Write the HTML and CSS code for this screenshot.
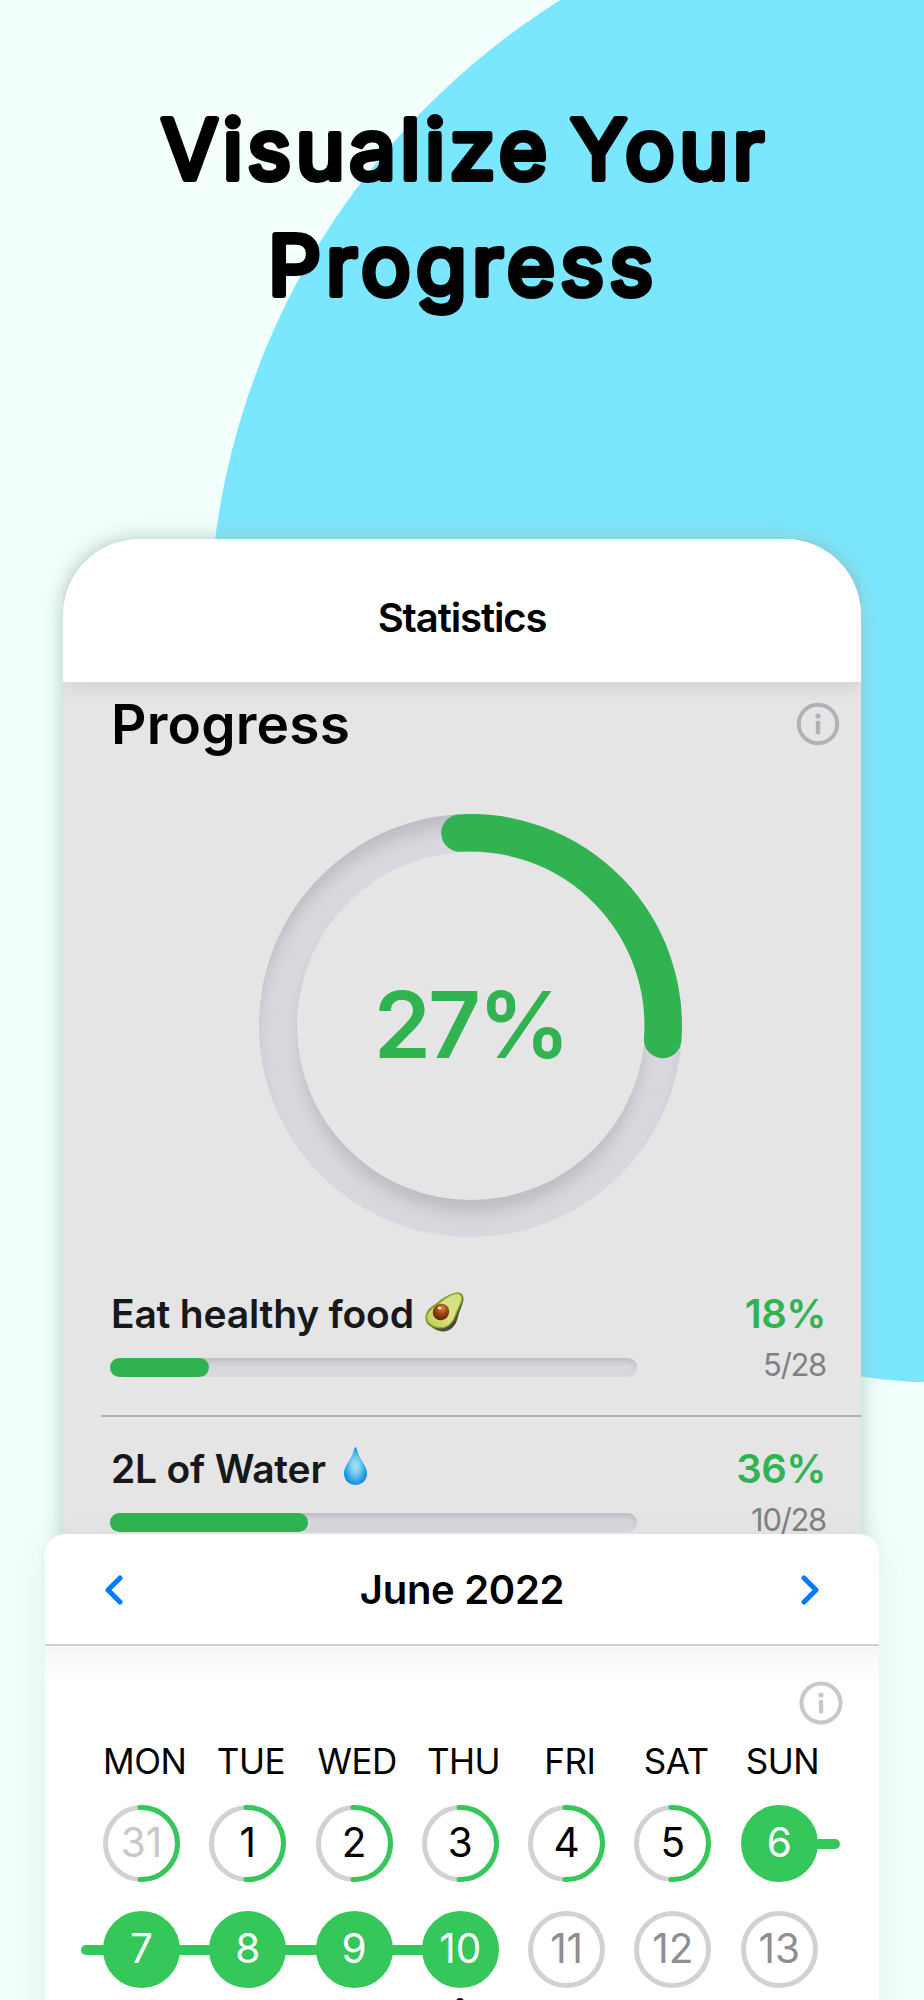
FILE: index.html
```html
<!DOCTYPE html>
<html lang="en">
<head>
    <meta charset="UTF-8">
    <meta name="viewport" content="width=device-width, initial-scale=1.0">
    <title>Visualize Your Progress</title>
    <link rel="stylesheet" href="styles.css">
</head>
<body>
    <div class="screen">
        <div class="blob"></div>

        <svg class="hero" viewBox="0 0 924 539" width="924" height="539">
            <text x="161" y="179" textLength="603">Visualize Your</text>
            <text x="268" y="295" textLength="385">Progress</text>
        </svg>

        <section class="stats">
            <header class="stats-header">Statistics</header>
            <div class="stats-body">
                <div class="title-row">
                    <h2>Progress</h2>
                    <svg class="info" viewBox="0 0 44 44">
                        <circle class="info-ring" cx="22" cy="22" r="19.2"/>
                        <circle cx="22" cy="14" r="2.6"/>
                        <rect x="19.8" y="18.6" width="4.4" height="14" rx="2"/>
                    </svg>
                </div>

                <div class="ring">
                    <div class="ring-hole">27%</div>
                    <svg class="ring-arc" viewBox="0 0 423 423">
                        <path d="M201 19.1 A192.75 192.75 0 0 1 403.7 225.5"/>
                    </svg>
                </div>

                <div class="habit">
                    <div class="habit-left">
                        <div class="habit-name"><span>Eat healthy food</span>
                            <svg class="avocado" viewBox="0 0 39 40">
                                <defs>
                                    <linearGradient id="skin" x1="0" y1="0" x2="1" y2="1">
                                        <stop offset="0" stop-color="#8faa2c"/>
                                        <stop offset="0.5" stop-color="#5c7a22"/>
                                        <stop offset="0.8" stop-color="#45433a"/>
                                        <stop offset="1" stop-color="#6b6862"/>
                                    </linearGradient>
                                    <linearGradient id="flesh" x1="1" y1="0" x2="0" y2="1">
                                        <stop offset="0" stop-color="#cfdf7a"/>
                                        <stop offset="0.5" stop-color="#dbe48c"/>
                                        <stop offset="1" stop-color="#b8cc45"/>
                                    </linearGradient>
                                    <radialGradient id="pit" cx="0.4" cy="0.3" r="0.7">
                                        <stop offset="0" stop-color="#d98a4e"/>
                                        <stop offset="0.45" stop-color="#a34a14"/>
                                        <stop offset="1" stop-color="#5e2206"/>
                                    </radialGradient>
                                </defs>
                                <path fill="url(#skin)" d="M30 1 C36 -1 40 4 38 10 C36 17 34 20 33 25 C31 34 25 40 17 39.500 C12 39 9 37 6 34.500 C1 32 -0.500 27 1 22 C3 16 8 14 13 10 C18 6 24 2 30 1 Z"/>
                                <path fill="url(#flesh)" stroke="#8cae25" stroke-width="1.200" d="M30 1.700 C35 0.500 38 4 36.500 9 C35 14 32 18 30.500 23 C28.500 30 23 36 15.500 35.700 C7 35.500 0 30 2 23 C4 17 9 15 14 11 C19 7 24 2.800 30 1.700 Z"/>
                                <ellipse cx="16" cy="20" rx="8" ry="8.500" fill="url(#pit)" transform="rotate(40 16 20)"/>
                                <ellipse cx="14.500" cy="16" rx="1.800" ry="1.200" fill="#fbe3cc"/>
                            </svg>
                        </div>
                        <div class="bar"><div class="bar-fill" style="width: 18.8%"></div></div>
                    </div>
                    <div class="habit-right">
                        <div class="percent">18%</div>
                        <div class="count">5/28</div>
                    </div>
                </div>

                <div class="habit">
                    <div class="habit-left">
                        <div class="habit-name"><span>2L of Water</span>
                            <svg class="drop" viewBox="0 0 23 38">
                                <defs>
                                    <radialGradient id="water" cx="0.5" cy="0.5" r="0.55">
                                        <stop offset="0" stop-color="#a9e2ee"/>
                                        <stop offset="0.35" stop-color="#7fd0ee"/>
                                        <stop offset="0.75" stop-color="#2ba3e4"/>
                                        <stop offset="1" stop-color="#1586d0"/>
                                    </radialGradient>
                                </defs>
                                <path fill="url(#water)" d="M11.500 0 C12.500 0 13 2 14 6 C16 13 23 19 23 26.500 C23 33 18 38 11.500 38 C5 38 0 33 0 26.500 C0 19 7 13 9 6 C10 2 10.500 0 11.500 0 Z"/>
                            </svg>
                        </div>
                        <div class="bar"><div class="bar-fill" style="width: 37.6%"></div></div>
                    </div>
                    <div class="habit-right">
                        <div class="percent">36%</div>
                        <div class="count">10/28</div>
                    </div>
                </div>
            </div>
        </section>

        <section class="calendar">
            <header class="calendar-header">
                <svg class="chevron" viewBox="0 0 18 30"><path d="M15 3 L3 15 L15 27"/></svg>
                <span>June 2022</span>
                <svg class="chevron" viewBox="0 0 18 30"><path d="M3 3 L15 15 L3 27"/></svg>
            </header>
            <div class="calendar-body">
                <svg class="info" viewBox="0 0 44 44">
                    <circle class="info-ring" cx="22" cy="22" r="19.5"/>
                    <circle cx="22" cy="14" r="2.6"/>
                    <rect x="19.8" y="18.6" width="4.4" height="14" rx="2"/>
                </svg>
                <div class="weekdays">
                    <span>MON</span><span>TUE</span><span>WED</span><span>THU</span><span>FRI</span><span>SAT</span><span>SUN</span>
                </div>
                <div class="days">
                    <div class="day half other"><svg viewBox="0 0 77 77"><path d="M37 2.500 H38.500 A36 36 0 0 1 38.500 74.500 H37"/></svg><b>31</b></div>
                    <div class="day half"><svg viewBox="0 0 77 77"><path d="M37 2.500 H38.500 A36 36 0 0 1 38.500 74.500 H37"/></svg><b>1</b></div>
                    <div class="day half"><svg viewBox="0 0 77 77"><path d="M37 2.500 H38.500 A36 36 0 0 1 38.500 74.500 H37"/></svg><b>2</b></div>
                    <div class="day half"><svg viewBox="0 0 77 77"><path d="M37 2.500 H38.500 A36 36 0 0 1 38.500 74.500 H37"/></svg><b>3</b></div>
                    <div class="day half"><svg viewBox="0 0 77 77"><path d="M37 2.500 H38.500 A36 36 0 0 1 38.500 74.500 H37"/></svg><b>4</b></div>
                    <div class="day half"><svg viewBox="0 0 77 77"><path d="M37 2.500 H38.500 A36 36 0 0 1 38.500 74.500 H37"/></svg><b>5</b></div>
                    <div class="day done row-end"><b>6</b></div>
                    <div class="day done row-start"><b>7</b></div>
                    <div class="day done"><b>8</b></div>
                    <div class="day done"><b>9</b></div>
                    <div class="day done last today"><b>10</b></div>
                    <div class="day future"><b>11</b></div>
                    <div class="day future"><b>12</b></div>
                    <div class="day future"><b>13</b></div>
                </div>
            </div>
        </section>
    </div>
</body>
</html>
```
FILE: styles.css
```css
* {
    box-sizing: border-box;
}

body {
    margin: 0;
    font-family: 'Inter', 'Liberation Sans', sans-serif;
    color: #000;
}

svg {
    display: block;
    flex-shrink: 0;
}

.screen {
    position: relative;
    width: 924px;
    height: 2000px;
    overflow: hidden;
    background: #f2fffd;
}

/* big circle behind everything */
.blob {
    position: absolute;
    left: 208.5px;
    top: -114.5px;
    width: 1497px;
    height: 1497px;
    border-radius: 50%;
    background: #7ae7ff;
}

.hero {
    position: relative;
}

.hero text {
    font-size: 83px;
    font-weight: 400;
    stroke: #000;
    stroke-width: 6px;
    stroke-linejoin: round;
    word-spacing: -9px;
}

.stats {
    position: relative;
    height: 1030px;
    margin: 0 63px;
    border-radius: 76px 76px 0 0;
    background: #e5e5e5;
    box-shadow: 0 0 22px rgba(160, 192, 180, 0.8);
}

.stats-header {
    position: relative;
    height: 142.5px;
    padding-top: 55px;
    border-radius: 76px 76px 0 0;
    background: #fff;
    box-shadow: 0 6px 22px -2px rgba(0, 0, 0, 0.1);
    clip-path: inset(0 0 -30px 0);
    font-size: 40px;
    font-weight: 600;
    line-height: 48px;
    letter-spacing: -1.1px;
    text-align: center;
}

.title-row {
    display: flex;
    align-items: center;
    justify-content: space-between;
    height: 85.5px;
    padding: 0 21px 0 48px;
}

h2 {
    margin: 0;
    font-size: 55px;
    font-weight: 600;
    letter-spacing: 0.2px;
}

.info {
    width: 44px;
    height: 44px;
    fill: #b2b1b8;
}

.info-ring {
    fill: none;
    stroke: #b2b1b8;
    stroke-width: 4px;
}

.ring {
    position: relative;
    width: 423px;
    height: 423px;
    margin: 47px 0 0 196px;
    padding: 37.5px;
    border-radius: 50%;
    background: #d9d8df;
    box-shadow: inset 0 14px 16px -2px rgba(0, 0, 0, 0.13);
}

.ring-hole {
    height: 348px;
    border-radius: 50%;
    background: #e5e5e5;
    box-shadow: 0 14px 16px -2px rgba(0, 0, 0, 0.13);
    color: #30b350;
    font-size: 92px;
    font-weight: 600;
    line-height: 346px;
    letter-spacing: -3px;
    text-align: center;
}

.ring-arc {
    position: absolute;
    left: 0;
    top: 0;
    width: 423px;
    height: 423px;
    fill: none;
    stroke: #30b350;
    stroke-width: 37.5px;
    stroke-linecap: round;
}

.habit {
    display: flex;
    justify-content: space-between;
    height: 155px;
    margin-left: 38px;
    padding: 28.5px 35px 0 9px;
    border-bottom: 2px solid #b0b0b0;
}

.ring + .habit {
    height: 180px;
    padding-top: 53.5px;
}

.habit-left {
    width: 527px;
}

.habit-name {
    display: flex;
    align-items: center;
    height: 46px;
    margin-bottom: 21px;
    padding-left: 1px;
    color: #18181a;
    font-size: 39px;
    font-weight: 600;
    letter-spacing: -0.2px;
}

.avocado {
    width: 39px;
    height: 40px;
    margin: -3px 0 0 11px;
}

.drop {
    width: 23px;
    height: 38px;
    margin: -5px 0 0 18px;
}

.bar {
    height: 19px;
    border-radius: 10px;
    background: #d9d8df;
    box-shadow: inset 0 5px 7px -2px rgba(0, 0, 0, 0.15);
}

.bar-fill {
    height: 19px;
    border-radius: 10px;
    background: #30b350;
}

.habit-right {
    text-align: right;
}

.percent {
    height: 46px;
    color: #30b350;
    font-size: 40px;
    font-weight: 600;
    line-height: 46px;
    letter-spacing: -0.5px;
}

.count {
    margin-top: 9px;
    color: #808084;
    font-size: 31px;
    line-height: 38px;
    letter-spacing: -1.3px;
}

.calendar {
    position: relative;
    height: 500px;
    margin: -35px 45px 0;
    border-radius: 20px 20px 0 0;
    background: #fff;
    box-shadow: 0 10px 36px rgba(60, 120, 100, 0.11);
}

.calendar-header {
    display: flex;
    align-items: center;
    justify-content: space-between;
    height: 112px;
    padding: 1px 60px 0;
    border-bottom: 2px solid #cfcfd2;
    font-size: 40px;
    font-weight: 600;
    letter-spacing: -0.3px;
}

.chevron {
    width: 18px;
    height: 30px;
    fill: none;
    stroke: #007aff;
    stroke-width: 5px;
    stroke-linecap: round;
    stroke-linejoin: round;
}

.calendar-body {
    padding-top: 35px;
    background: linear-gradient(#f6f6f7, #fff 38px);
}

.calendar-body .info {
    margin-left: 753.5px;
    fill: #c7c7cc;
}

.calendar-body .info-ring {
    stroke: #c7c7cc;
}

.weekdays {
    display: grid;
    grid-template-columns: repeat(7, 106.3px);
    margin: 15px 0 0 46.5px;
    font-size: 35px;
    line-height: 43px;
    letter-spacing: -0.5px;
    text-align: center;
}

.days {
    display: grid;
    grid-template-columns: repeat(7, 106.3px);
    row-gap: 29.3px;
    margin: 22px 0 0 43.3px;
}

.day {
    position: relative;
    display: flex;
    justify-content: center;
    height: 77px;
}

.day b {
    position: relative;
    width: 77px;
    height: 77px;
    border: 5px solid #d1d1d6;
    border-radius: 50%;
    font-size: 40.5px;
    font-weight: 400;
    line-height: 66px;
    text-align: center;
}

.day svg {
    position: absolute;
    z-index: 1;
    width: 77px;
    height: 77px;
    fill: none;
    stroke: #35c759;
    stroke-width: 5px;
    stroke-linecap: round;
}

.other b {
    color: #c7c7cc;
}

.future b {
    color: #8e8e93;
}

.done b {
    border-color: #35c759;
    background: #35c759;
    color: #fff;
}

/* streak line joining completed days */
.done::before {
    content: '';
    position: absolute;
    top: 33.5px;
    left: 0;
    right: 0;
    height: 10px;
    background: #35c759;
}

.row-end::before {
    left: 50%;
    right: -7.5px;
    border-radius: 0 5px 5px 0;
}

.row-start::before {
    left: -7.5px;
    border-radius: 5px 0 0 5px;
}

.last::before {
    right: 50%;
}

.today::after {
    content: '';
    position: absolute;
    left: 49px;
    top: 87px;
    width: 8px;
    height: 8px;
    border-radius: 50%;
    background: #000;
}
```
